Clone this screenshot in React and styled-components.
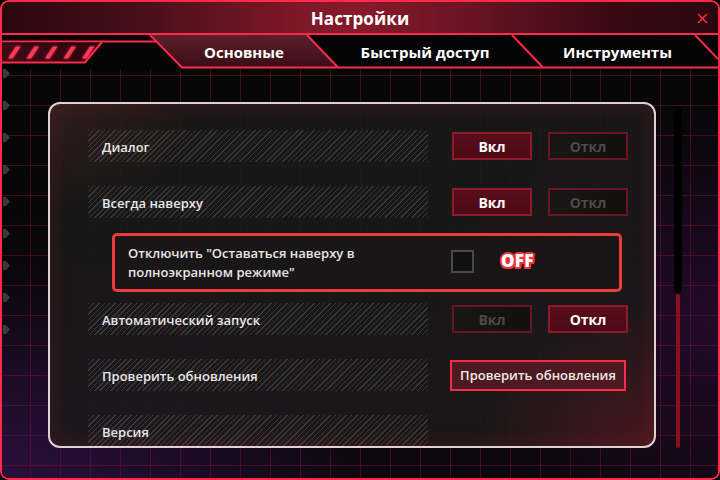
import React from 'react';
import styled, { createGlobalStyle } from 'styled-components';

const Global = createGlobalStyle`
  html, body { margin: 0; padding: 0; background: #000; }
  body {
    width: 720px; height: 480px; overflow: hidden;
    font-family: "Open Sans", "Noto Sans", sans-serif;
  }
`;

const Window = styled.div`
  width: 720px; height: 480px; box-sizing: border-box;
  border: 2px solid #ff2a4a; border-radius: 9px; overflow: hidden;
  display: flex; flex-direction: column; background: #050505;
`;

const TitleBar = styled.div`
  height: 31px; flex: none;
  display: grid; grid-template-columns: 1fr auto 1fr; align-items: center;
  background: linear-gradient(90deg, #2c070e 0%, #48101a 20%, #7c1727 40%, #861a2b 50%, #6a1424 65%, #3a0a13 85%, #2a070e 100%);
  border-bottom: 2px solid #ff2a4a;
`;

const Title = styled.div`
  grid-column: 2; color: #fff; font-weight: 700; font-size: 17px;
  letter-spacing: 0.1px; padding-top: 2px;
`;

const Close = styled.div`
  grid-column: 3; justify-self: end; margin-right: 10px;
  display: flex; align-items: center; padding-top: 1px;
`;

const TabRow = styled.div`
  height: 34px; flex: none; position: relative;
  display: flex; align-items: center; background: #050505;
`;

const TabArt = styled.svg`
  position: absolute; left: 0; top: 0;
`;

const TabSpacer = styled.div`
  width: 164px; flex: none;
`;

const Tab = styled.div`
  position: relative; width: ${p => p.$w}px; flex: none; text-align: center;
  color: #fff; font-weight: 700; font-size: 15px; padding-bottom: 1px;
`;

const Content = styled.div`
  flex: 1; position: relative; display: flex; align-items: flex-start;
  padding: 33px 0 0 46px;
  background:
    linear-gradient(rgba(110, 18, 42, 0.55) 1px, transparent 1px) 0 6px / 30px 30px,
    linear-gradient(90deg, rgba(110, 18, 42, 0.55) 1px, transparent 1px) 28px 0 / 30px 30px,
    radial-gradient(ellipse 55% 55% at 0% 100%, #2a0f3c 0%, rgba(30, 10, 40, 0) 100%),
    radial-gradient(ellipse 40% 55% at 100% 62%, #230a2a 0%, rgba(30, 10, 40, 0) 100%),
    linear-gradient(#060606, #0c070c);
`;

const Arrows = styled.div`
  position: absolute; left: 1px; top: 0;
  display: flex; flex-direction: column; gap: 23px;
`;

const Arrow = styled.div`
  width: 7px; height: 9px; background: #3c3a3a;
  clip-path: polygon(0 0, 40% 0, 100% 50%, 40% 100%, 0 100%);
`;

const Panel = styled.div`
  width: 608px; height: 346px; flex: none; box-sizing: border-box;
  border: 2px solid #dcd4d4; border-radius: 12px; overflow: hidden;
  padding: 26px 0 0 38px;
  background:
    radial-gradient(ellipse 30% 40% at 100% 100%, rgba(110, 24, 34, 0.55), rgba(110, 24, 34, 0)),
    radial-gradient(ellipse 25% 30% at 0% 0%, rgba(90, 40, 40, 0.35), rgba(90, 40, 40, 0)),
    rgba(27, 25, 25, 0.9);
  box-shadow: inset 0 0 22px rgba(140, 30, 44, 0.3);
`;

const List = styled.div`
  display: flex; flex-direction: column; gap: 24px;
`;

const Row = styled.div`
  display: flex; align-items: center; height: 32px; flex: none;
`;

const Label = styled.div`
  width: 340px; height: 32px; flex: none; box-sizing: border-box;
  display: flex; align-items: center; padding: 1px 0 0 14px;
  color: #ebe6e6; font-size: 13px; font-weight: 600;
  background: repeating-linear-gradient(135deg, rgba(255, 255, 255, 0.14) 0 1px, rgba(255, 255, 255, 0) 1px 3.8px);
`;

const Buttons = styled.div`
  display: flex; gap: 16px; margin-left: 24px;
`;

const Toggle = styled.div`
  width: 80px; height: 28px; box-sizing: border-box;
  display: flex; align-items: center; justify-content: center;
  font-size: 14px; font-weight: 700;
  border: 2px solid ${p => (p.$on ? '#8e1a2c' : '#6a1424')};
  color: ${p => (p.$on ? '#ffffff' : '#4c4a4a')};
  background: ${p => (p.$on
    ? 'linear-gradient(180deg, #5a0d1a, #4c0a16)'
    : 'linear-gradient(90deg, #1b1616, #120f0f)')};
`;

const UpdateButton = styled.div`
  margin-left: 22px; width: 176px; height: 31px; box-sizing: border-box;
  display: flex; align-items: center; justify-content: center;
  border: 2px solid #ff2a48; background: #4e1a22;
  color: #f0e9e9; font-size: 13px; font-weight: 600;
`;

const Highlight = styled.div`
  margin: -9px 0 -13px 24px; width: 510px; height: 59px; flex: none; box-sizing: border-box;
  border: 3px solid #ee3a3c; border-radius: 5px; background: #181616;
  display: flex; align-items: center; padding-left: 13px;
`;

const HText = styled.div`
  width: 323px; flex: none; color: #ebe6e6; font-size: 13px; font-weight: 600;
  line-height: 19px;
`;

const Check = styled.div`
  width: 23px; height: 23px; box-sizing: border-box; margin-top: -3px;
  border: 2px solid #4a4848; background: #111010;
`;

const Off = styled.div`
  margin-left: 27px; margin-top: -4px; color: #fff; font-size: 17px; font-weight: 800;
  letter-spacing: 0.3px;
  text-shadow:
    2px 0 0 #ee3340, -2px 0 0 #ee3340, 0 2px 0 #ee3340, 0 -2px 0 #ee3340,
    1.5px 1.5px 0 #ee3340, -1.5px 1.5px 0 #ee3340, 1.5px -1.5px 0 #ee3340, -1.5px -1.5px 0 #ee3340,
    0 0 3px #ee3340;
`;

const Scroll = styled.div`
  margin: 5px 0 0 18px; width: 8px; flex: none;
  display: flex; flex-direction: column; align-items: center; gap: 1px;
`;

const Track = styled.div`
  width: 8px; height: 186px; background: #000; border-radius: 4px;
`;

const Thumb = styled.div`
  width: 4px; height: 154px; background: #8a0f1c; border-radius: 2px;
`;

const stripes = [0, 1, 2, 3, 4];

function TabDecor() {
  return (
    <TabArt width="716" height="34" viewBox="2 35 716 34">
      <defs>
        <linearGradient id="tabFill" x1="0" y1="0" x2="0" y2="1">
          <stop offset="0" stopColor="#5c1f2b" />
          <stop offset="1" stopColor="#3a0d17" />
        </linearGradient>
        <linearGradient id="boxFill" x1="0" y1="0" x2="1" y2="0">
          <stop offset="0" stopColor="#3e0a15" />
          <stop offset="1" stopColor="#2a060e" />
        </linearGradient>
        <filter id="glow" x="-50%" y="-50%" width="200%" height="200%">
          <feGaussianBlur stdDeviation="1.4" />
        </filter>
      </defs>
      <polygon points="150,35 307,35 338,67.5 182,67.5" fill="url(#tabFill)" />
      <line x1="2" y1="41.5" x2="157" y2="41.5" stroke="#ff2a4a" strokeWidth="2" />
      <polygon points="2,42.5 102,42.5 85,62.5 2,62.5" fill="url(#boxFill)" />
      {stripes.map(i => {
        const x = 8 + i * 18.5;
        const pts = `${x},58.5 ${x + 4.5},58.5 ${x + 12.5},46.5 ${x + 8},46.5`;
        return (
          <g key={i}>
            <polygon points={pts} fill="#ff2a4a" filter="url(#glow)" opacity="0.9" />
            <polygon points={pts} fill="#ff3a58" />
          </g>
        );
      })}
      <polyline points="102,42 85,62.5 2,62.5" fill="none" stroke="#ff2a4a" strokeWidth="2" />
      <line x1="150" y1="35" x2="182" y2="67.5" stroke="#ff2a4a" strokeWidth="2" />
      <line x1="307" y1="35" x2="338" y2="67.5" stroke="#ff2a4a" strokeWidth="2" />
      <line x1="181" y1="67.5" x2="718" y2="67.5" stroke="#ff2a4a" strokeWidth="2" />
      <line x1="512" y1="35" x2="543" y2="67.5" stroke="#ff2a4a" strokeWidth="2" />
      <line x1="695" y1="35" x2="722" y2="63" stroke="#ff2a4a" strokeWidth="2" />
    </TabArt>
  );
}

function OnOff({ on }) {
  return (
    <Buttons>
      <Toggle $on={on}>Вкл</Toggle>
      <Toggle $on={!on}>Откл</Toggle>
    </Buttons>
  );
}

export default function App() {
  return (
    <>
      <Global />
      <Window>
        <TitleBar>
          <Title>Настройки</Title>
          <Close>
            <svg width="11" height="11" viewBox="0 0 11 11">
              <path d="M1 1 L10 10 M10 1 L1 10" stroke="#ff2a4a" strokeWidth="1.5" />
            </svg>
          </Close>
        </TitleBar>
        <TabRow>
          <TabDecor />
          <TabSpacer />
          <Tab $w={156}>Основные</Tab>
          <Tab $w={206}>Быстрый доступ</Tab>
          <Tab $w={179}>Инструменты</Tab>
        </TabRow>
        <Content>
          <Arrows>
            {Array.from({ length: 9 }).map((_, i) => <Arrow key={i} />)}
          </Arrows>
          <Panel>
            <List>
              <Row>
                <Label>Диалог</Label>
                <OnOff on />
              </Row>
              <Row>
                <Label>Всегда наверху</Label>
                <OnOff on />
              </Row>
              <Highlight>
                <HText>Отключить "Оставаться наверху в<br />полноэкранном режиме"</HText>
                <Check />
                <Off>OFF</Off>
              </Highlight>
              <Row>
                <Label>Автоматический запуск</Label>
                <OnOff on={false} />
              </Row>
              <Row>
                <Label>Проверить обновления</Label>
                <UpdateButton>Проверить обновления</UpdateButton>
              </Row>
              <Row>
                <Label>Версия</Label>
              </Row>
            </List>
          </Panel>
          <Scroll>
            <Track />
            <Thumb />
          </Scroll>
        </Content>
      </Window>
    </>
  );
}
